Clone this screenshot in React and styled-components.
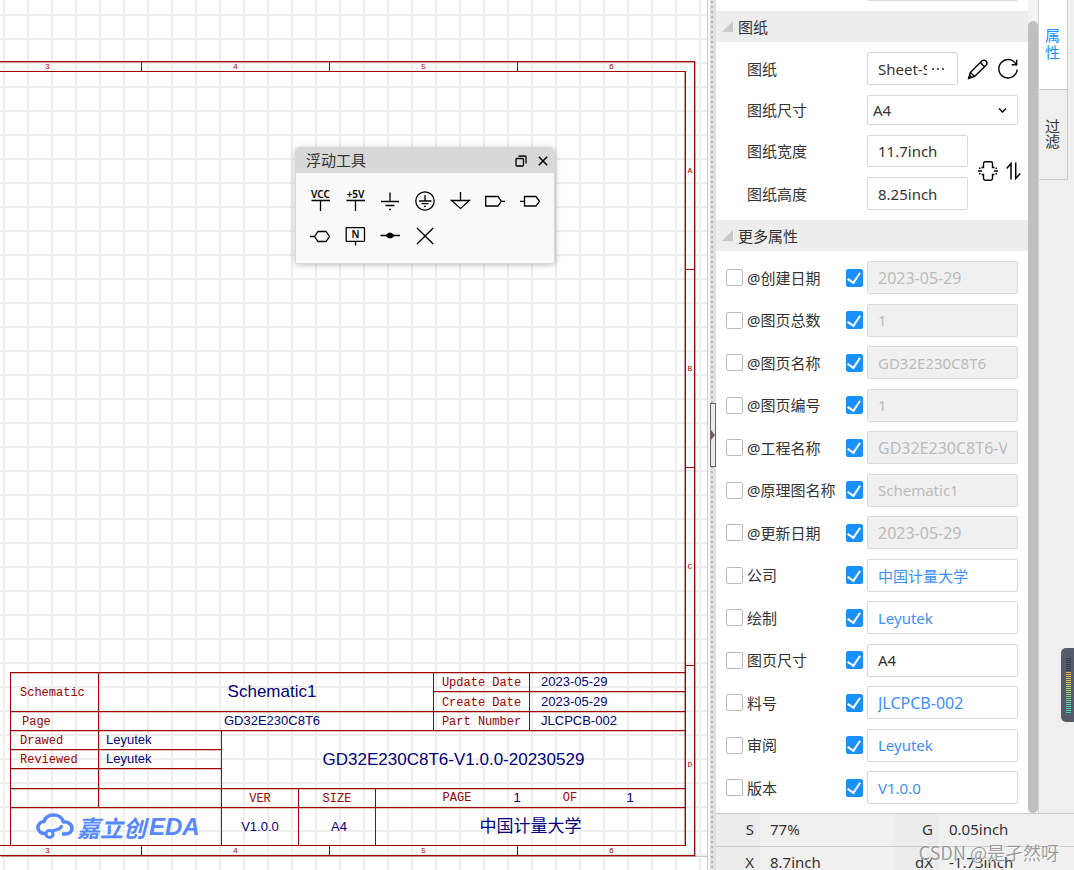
import { useState } from "react";
import styled, { createGlobalStyle, css } from "styled-components";

const GlobalStyle = createGlobalStyle`
  * {
    box-sizing: border-box;
  }
  body {
    margin: 0;
    overflow: hidden;
    color: #333;
    font-family: "Noto Sans", "Noto Sans CJK SC", sans-serif;
    font-size: 15px;
  }
  button,
  input,
  select {
    font: inherit;
    color: inherit;
    margin: 0;
  }
  button {
    padding: 0;
    border: 0;
    background: none;
    cursor: pointer;
  }
  svg {
    display: block;
    overflow: visible;
  }
`;

const Wrap = styled.div`
  display: flex;
  height: 100vh;
  position: relative;
  overflow: hidden;
`;

/* ---------- canvas ---------- */
const Canvas = styled.main`
  flex: 1;
  min-width: 0;
  display: flex;
  flex-direction: column;
  position: relative;
  overflow: hidden;
  border-right: 1px solid #ccc;
  background-color: #fff;
  background-image: linear-gradient(#eee 2px, transparent 2px),
    linear-gradient(90deg, #eee 2px, transparent 2px);
  background-size: 24px 24px;
  background-position: 3px 14px;
`;

const Paper = styled.div`
  flex: 1;
  min-height: 0;
  display: flex;
  margin: 61px 0 13px;
  padding-right: 12px;
  border-bottom: 1px solid #ccc;
`;

const Sheet = styled.div`
  flex: 1;
  min-width: 0;
  display: flex;
  flex-direction: column;
  overflow: hidden;
  border: 1px solid #a00000;
  border-left: 0;
  box-shadow: 1px 1px 0 rgba(160, 0, 0, 0.3), inset 0 1px 0 rgba(160, 0, 0, 0.3);
`;

const Ruler = styled.div`
  display: flex;
  flex: none;
  overflow: hidden;
  font-family: "Liberation Mono", monospace;
  font-size: 8px;
  line-height: 9px;
  color: #a00000;
  span {
    flex: none;
    display: flex;
    align-items: center;
    justify-content: center;
  }
`;

const RulerX = styled(Ruler)`
  height: ${(props) => (props.$top ? 10 : 9)}px;
  margin: 0 8px 0 -46px;
  border-bottom: ${(props) => (props.$top ? "1px solid #a00000" : "0")};
  span {
    width: 188px;
    border-right: 1px solid #a00000;
  }
`;

const RulerY = styled(Ruler)`
  flex-direction: column;
  width: 8px;
  span {
    height: 198px;
    border-bottom: 1px solid #a00000;
  }
`;

const Middle = styled.div`
  flex: 1;
  min-height: 0;
  display: flex;
`;

const Inner = styled.div`
  flex: 1;
  min-width: 0;
  display: flex;
  flex-direction: column;
  justify-content: flex-end;
  padding-left: 10px;
  border-right: 1px solid #a00000;
  border-bottom: 1px solid #a00000;
  box-shadow: inset -1px 0 0 rgba(160, 0, 0, 0.4);
`;

const TitleBlock = styled.table`
  width: 100%;
  table-layout: fixed;
  border-collapse: separate;
  border-spacing: 0;
  color: #000080;
  font-family: "Liberation Sans", "Noto Sans CJK SC", sans-serif;
  font-size: 13px;
  line-height: 16px;
  text-align: center;
  th,
  td {
    padding: 0;
    border-top: 1px solid #a00000;
    border-left: 1px solid #a00000;
    box-shadow: inset 0 1px 0 rgba(160, 0, 0, 0.25);
    white-space: nowrap;
  }
  th {
    padding-top: 2px;
    color: #a00000;
    font-family: "Liberation Mono", monospace;
    font-size: 12px;
    font-weight: 400;
  }
`;

const Tr = styled.tr`
  height: ${(props) => props.$h}px;
`;

const Side = styled.th`
  && {
    padding-left: ${(props) => props.$left || 9}px;
    text-align: left;
  }
`;

const Val = styled.td`
  && {
    padding-left: ${(props) => props.$left || 0}px;
    text-align: ${(props) => (props.$start ? "left" : "center")};
    font-size: ${(props) => (props.$big ? 17 : 13)}px;
  }
`;

const PageCount = styled.div`
  display: grid;
  grid-template-columns: 44px 76px 30px 90px;
  padding-left: 59px;
  font-family: "Liberation Sans", sans-serif;
  b {
    color: #a00000;
    font-family: "Liberation Mono", monospace;
    font-size: 12px;
    font-weight: 400;
  }
  span {
    font-size: 13px;
    color: #000080;
  }
`;

const Logo = styled.div`
  display: flex;
  align-items: center;
  gap: 3px;
  height: 36px;
  padding-left: 25px;
  color: #5588ff;
  font-weight: 700;
  font-style: italic;
  line-height: 30px;
  span {
    font-family: "Noto Sans CJK SC", sans-serif;
    font-size: 23px;
  }
  b {
    font-size: 24px;
  }
`;

/* ---------- floating tools ---------- */
const FloatBox = styled.section`
  position: absolute;
  left: 295px;
  top: 147px;
  width: 260px;
  border: 1px solid #d8d8d8;
  border-radius: 5px 5px 2px 2px;
  overflow: hidden;
  background: #f9f9f9;
  box-shadow: 0 1px 6px rgba(0, 0, 0, 0.25);
  header {
    display: flex;
    align-items: center;
    gap: 10px;
    height: 25px;
    padding: 0 5px 0 10px;
    background: #d8d8d8;
  }
  h2 {
    flex: 1;
    margin: 0;
    font-size: 15px;
    font-weight: 400;
    line-height: 25px;
  }
`;

const ToolGrid = styled.div`
  display: grid;
  grid-template-columns: repeat(7, 35px);
  grid-auto-rows: 35px;
  padding: 10px 6px;
  button {
    display: flex;
    align-items: center;
    justify-content: center;
  }
`;

/* ---------- splitter ---------- */
const Splitter = styled.div`
  flex: none;
  width: 8px;
  display: flex;
  align-items: center;
  border-left: 2px solid #f8f8f8;
  background-color: #e0e0e0;
  background-image: radial-gradient(circle at 2px 2px, #b4b4b4 1px, transparent 1px);
  background-size: 6px 5px;
  button {
    width: 6px;
    height: 64px;
    border: 1px solid #6b5f5f;
    background: #ebebeb;
  }
`;

/* ---------- right side ---------- */
const Aside = styled.aside`
  flex: 0 0 358px;
  min-width: 0;
  display: flex;
  flex-direction: column;
  background: #efefef;
`;

const Upper = styled.div`
  flex: 1;
  min-height: 0;
  display: flex;
`;

const Panel = styled.form`
  flex: 1;
  min-width: 0;
  display: flex;
  flex-direction: column;
  background: #fff;
  overflow: hidden;
`;

const PrevField = styled.div`
  flex: none;
  height: 1px;
  margin: 0 11px 10px 152px;
  background: #d9d9d9;
`;

const SectionHead = styled.button`
  flex: none;
  display: flex;
  align-items: center;
  gap: 5px;
  height: 31px;
  padding: 0 6px 1px;
  background: #ededed;
  text-align: left;
  &::before {
    content: "";
    border-left: 11px solid transparent;
    border-bottom: 11px solid #c9c9c9;
  }
`;

const SheetForm = styled.div`
  flex: none;
  display: flex;
  flex-direction: column;
  gap: 10px;
  padding: 10px 10px 10px 31px;
`;

const Line = styled.div`
  display: flex;
  align-items: center;
  label {
    flex: none;
    width: 120px;
    padding-bottom: 1px;
  }
`;

const SizeGroup = styled.div`
  display: flex;
  align-items: center;
`;

const Stack = styled.div`
  display: flex;
  flex-direction: column;
  gap: 10px;
`;

const IconPair = styled.div`
  display: flex;
  align-items: center;
  gap: ${(props) => props.$gap}px;
  margin-left: 10px;
  ${SizeGroup} & {
    padding-bottom: 3px;
  }
`;

const box = css`
  border: 1px solid #d9d9d9;
  border-radius: 2px;
  background: #fff;
  outline: 0;
`;

const tones = { normal: "#333", link: "#3c8ffc", off: "#bbb" };

const Input = styled.input`
  ${box}
  width: ${(props) => props.$w || "100%"};
  min-width: 0;
  height: ${(props) => props.$h || 33}px;
  padding: 0 10px;
  font-size: ${(props) => (props.$code ? 16 : 15)}px;
  color: ${(props) => tones[props.$tone || "normal"]};
  &:disabled {
    background: #f0f0f0;
  }
`;

const Picker = styled.div`
  ${box}
  flex: none;
  display: flex;
  align-items: center;
  width: 91px;
  height: 33px;
  padding: 0 11px 0 10px;
  gap: 4px;
  input {
    width: 49px;
    padding: 0;
    border: 0;
    outline: 0;
    background: none;
  }
  button {
    flex: 1;
  }
`;

const SelectBox = styled.div`
  ${box}
  flex: 1;
  display: grid;
  align-items: center;
  select,
  svg {
    grid-area: 1 / 1;
  }
  select {
    appearance: none;
    height: 28px;
    padding: 0 5px;
    border: 0;
    outline: 0;
    background: none;
  }
  svg {
    justify-self: end;
    margin-right: 10px;
    pointer-events: none;
  }
`;

const PropList = styled.div`
  flex: 1;
  min-height: 0;
  display: flex;
  flex-direction: column;
  justify-content: space-between;
  padding: 10px 10px 9px;
`;

const PropRow = styled.div`
  display: grid;
  grid-template-columns: 17px 95px 17px 1fr;
  column-gap: 4px;
  align-items: center;
  label {
    padding-bottom: 1px;
    white-space: nowrap;
  }
`;

const Check = styled.input.attrs({ type: "checkbox" })`
  appearance: none;
  display: grid;
  place-items: center;
  width: 17px;
  height: 17px;
  border: 1px solid #bbb;
  border-radius: 2px;
  background: #fff;
  &:checked {
    height: 18px;
    border-color: #1890ff;
    background: #1890ff;
  }
  &:checked::after {
    content: "";
    width: 6px;
    height: 11px;
    margin: 0 1px 2px 0;
    border: solid #fff;
    border-width: 0 2px 2px 0;
    transform: rotate(34deg);
  }
`;

const ScrollTrack = styled.div`
  flex: none;
  width: 10px;
  padding-top: 21px;
  background: #f3f3f3;
  div {
    height: 100%;
    border-radius: 5px;
    background: #bfbfbf;
  }
`;

const Tabs = styled.nav`
  flex: none;
  width: 36px;
  border-left: 1px solid #d4d4d4;
`;

const Tab = styled.button`
  display: flex;
  align-items: center;
  justify-content: center;
  width: 29px;
  height: 90px;
  padding: 0 7px 2px 6px;
  border: solid #ccc;
  border-width: 0 1px 1px 0;
  line-height: ${(props) => (props.$on ? 17 : 15)}px;
  color: ${(props) => (props.$on ? "#1890ff" : "#333")};
  background: ${(props) => (props.$on ? "#fff" : "#efefef")};
`;

const Status = styled.dl`
  flex: none;
  display: grid;
  grid-template-columns: 44px 1fr 44px 1fr;
  grid-auto-rows: 33px;
  height: 57px;
  margin: 0;
  overflow: hidden;
  line-height: 31px;
  dt,
  dd {
    margin: 0;
    border-top: 1px solid #ccc;
  }
  dt {
    padding-right: 6px;
    text-align: right;
    background: #ececec;
  }
  dd {
    padding-left: 10px;
    background: #f0f0f0;
  }
`;

const Meter = styled.div`
  position: absolute;
  right: 0;
  top: 648px;
  width: 13px;
  height: 74px;
  padding: 9px 3px 8px 5px;
  border-radius: 5px 0 0 5px;
  background: #555b6b;
  div {
    height: 100%;
    background: repeating-linear-gradient(#555b6b 0 1px, transparent 1px 2px),
      linear-gradient(#333947 25%, #f0a830 25%, #d8d84c 45%, #7ed886 70%, #3fd8c8);
  }
`;

const Watermark = styled.div`
  position: absolute;
  right: 15px;
  bottom: 5px;
  font-family: "Noto Sans CJK SC", sans-serif;
  font-size: 18px;
  line-height: 26px;
  color: rgba(140, 140, 140, 0.85);
  text-shadow: 1px 1px 0 rgba(255, 255, 255, 0.8);
  pointer-events: none;
`;

function Icon({ children, size = 20, w = 1.3 }) {
  return (
    <svg
      width={size}
      height={size}
      viewBox={`0 0 ${size} ${size}`}
      fill="none"
      stroke="#000"
      strokeWidth={w}
    >
      {children}
    </svg>
  );
}

function IconText({ y, children }) {
  return (
    <text
      x="10.5"
      y={y}
      textAnchor="middle"
      fontFamily="Noto Sans"
      fontWeight="600"
      fontSize="10"
      fill="#000"
      stroke="none"
    >
      {children}
    </text>
  );
}

const tools = [
  {
    name: "VCC",
    icon: (
      <>
        <IconText y="7">VCC</IconText>
        <path d="M1.5 9.5H20M10.5 9.5V20" />
      </>
    ),
  },
  {
    name: "+5V",
    icon: (
      <>
        <IconText y="7">+5V</IconText>
        <path d="M1.5 9.5H20M10.5 9.5V20" />
      </>
    ),
  },
  {
    name: "GND",
    icon: <path d="M10 1.5V10.5M1 10.5H19M5.5 14.5H14.5M9 18.5H11" />,
  },
  {
    name: "保护地",
    icon: (
      <>
        <circle cx="10" cy="10" r="9.2" />
        <path d="M10 4V10M4 10H16.5M6.5 12.7H13.5M9 15.3H11" />
      </>
    ),
  },
  { name: "模拟地", icon: <path d="M10.5 1V9.5M1.5 9.5H19.5L10.5 17.5Z" /> },
  {
    name: "输出端口",
    icon: <path d="M.7 5.5H13L16.3 10.3L13 15H.7ZM16.3 10.3H20" />,
  },
  {
    name: "输入端口",
    icon: <path d="M0 10.3H4.5M4.5 5.5H16L19.5 10.3L16 15H4.5Z" />,
  },
  {
    name: "双向端口",
    icon: <path d="M0 10.5H4.5L8 5.5H16L19.5 10.5L16 15.5H8L4.5 10.5" />,
  },
  {
    name: "网络标签",
    icon: (
      <>
        <rect x="1.2" y="1.7" width="18.3" height="13.6" rx="0.5" />
        <IconText y="12">N</IconText>
        <path d="M10.5 15.3V19.5" />
      </>
    ),
  },
  {
    name: "连接点",
    icon: (
      <>
        <path d="M.5 9.5H20" />
        <path d="M5 9.5L8.5 6.8H11.5L15 9.5L11.5 12.2H8.5Z" fill="#000" stroke="none" />
      </>
    ),
  },
  { name: "非连接标识", icon: <path d="M2 2L18.2 18M18.2 2L2 18" /> },
];

const props = [
  ["@创建日期", "2023-05-29", "off", true],
  ["@图页总数", "1", "off", false],
  ["@图页名称", "GD32E230C8T6", "off", false],
  ["@图页编号", "1", "off", false],
  ["@工程名称", "GD32E230C8T6-V", "off", true],
  ["@原理图名称", "Schematic1", "off", false],
  ["@更新日期", "2023-05-29", "off", true],
  ["公司", "中国计量大学", "link", false],
  ["绘制", "Leyutek", "link", false],
  ["图页尺寸", "A4", "normal", false],
  ["料号", "JLCPCB-002", "link", true],
  ["审阅", "Leyutek", "link", false],
  ["版本", "V1.0.0", "link", false],
];

function FloatTools() {
  return (
    <FloatBox>
      <header>
        <h2>浮动工具</h2>
        <button aria-label="折叠">
          <Icon size={12}>
            <rect x="1" y="3.5" width="7.5" height="7.5" rx="1" />
            <path d="M3.5 1H10a1 1 0 0 1 1 1V8.5" />
          </Icon>
        </button>
        <button aria-label="关闭">
          <Icon size={12} w={1.5}>
            <path d="M1.8 1.8L10.2 10.2M10.2 1.8L1.8 10.2" />
          </Icon>
        </button>
      </header>
      <ToolGrid>
        {tools.map((tool) => (
          <button key={tool.name} aria-label={tool.name}>
            <Icon>{tool.icon}</Icon>
          </button>
        ))}
      </ToolGrid>
    </FloatBox>
  );
}

function SchematicTable() {
  return (
    <TitleBlock>
      <colgroup>
        <col width="88" />
        <col width="123" />
        <col width="77" />
        <col width="77" />
        <col width="58" />
        <col width="96" />
        <col />
      </colgroup>
      <tbody>
        <Tr $h={19}>
          <Side rowSpan={2}>Schematic</Side>
          <Val rowSpan={2} colSpan={4} $big $left={12}>
            Schematic1
          </Val>
          <th>Update Date</th>
          <Val $start $left={11}>
            2023-05-29
          </Val>
        </Tr>
        <Tr $h={20}>
          <th>Create Date</th>
          <Val $start $left={11}>
            2023-05-29
          </Val>
        </Tr>
        <Tr $h={19}>
          <Side $left={11}>Page</Side>
          <Val colSpan={4} $left={12}>
            GD32E230C8T6
          </Val>
          <th>Part Number</th>
          <Val $start $left={11}>
            JLCPCB-002
          </Val>
        </Tr>
        <Tr $h={19}>
          <Side>Drawed</Side>
          <Val $start $left={7}>
            Leyutek
          </Val>
          <Val rowSpan={3} colSpan={5} $big>
            GD32E230C8T6-V1.0.0-20230529
          </Val>
        </Tr>
        <Tr $h={19}>
          <Side>Reviewed</Side>
          <Val $start $left={7}>
            Leyutek
          </Val>
        </Tr>
        <Tr $h={20}>
          <td />
          <td />
        </Tr>
        <Tr $h={19}>
          <td />
          <td />
          <th>VER</th>
          <th>SIZE</th>
          <Val colSpan={3}>
            <PageCount>
              <b>PAGE</b>
              <span>1</span>
              <b>OF</b>
              <span>1</span>
            </PageCount>
          </Val>
        </Tr>
        <Tr $h={38}>
          <td colSpan={2}>
            <Logo>
              <svg width="38" height="27" viewBox="0 0 38 27" fill="none" stroke="#5588ff">
                <path
                  d="M9 20.5H8C4.5 20.5 2 17.8 2 14.6C2 11.2 4.6 8.7 8 8.5C9.3 4.6 13 2 17.5 2C22.5 2 26.3 4.8 27.4 8.8C32 8.8 36 11.3 36 15.3C36 18.8 33 21 29.5 21H26"
                  strokeWidth="3.6"
                />
                <circle cx="13.5" cy="21" r="3.6" strokeWidth="3" />
                <path d="M16.5 18C19 16.5 23 17.5 25.5 13.5" strokeWidth="3.2" strokeLinecap="round" />
              </svg>
              <span>嘉立创</span>
              <b>EDA</b>
            </Logo>
          </td>
          <td>V1.0.0</td>
          <Val $left={4}>A4</Val>
          <Val colSpan={3} $big>
            中国计量大学
          </Val>
        </Tr>
      </tbody>
    </TitleBlock>
  );
}

export default function App() {
  const [tab, setTab] = useState("属性");
  const cols = ["3", "4", "5", "6"];

  return (
    <Wrap>
      <GlobalStyle />
      <Canvas>
        <Paper>
          <Sheet>
            <RulerX $top>
              {cols.map((c) => (
                <span key={c}>{c}</span>
              ))}
            </RulerX>
            <Middle>
              <Inner>
                <SchematicTable />
              </Inner>
              <RulerY>
                {["A", "B", "C", "D"].map((r) => (
                  <span key={r}>{r}</span>
                ))}
              </RulerY>
            </Middle>
            <RulerX>
              {cols.map((c) => (
                <span key={c}>{c}</span>
              ))}
            </RulerX>
          </Sheet>
        </Paper>
        <FloatTools />
      </Canvas>

      <Splitter>
        <button aria-label="收起面板">
          <svg width="4" height="10" viewBox="0 0 4 10">
            <path d="M0 0L4 5L0 10Z" fill="#6b5f5f" />
          </svg>
        </button>
      </Splitter>

      <Aside>
        <Upper>
          <Panel onSubmit={(e) => e.preventDefault()}>
            <PrevField />
            <SectionHead type="button">图纸</SectionHead>
            <SheetForm>
              <Line>
                <label htmlFor="sheet">图纸</label>
                <Picker>
                  <input id="sheet" defaultValue="Sheet-Symbol_A4" />
                  <button type="button" aria-label="选择图纸">
                    <svg width="14" height="4" viewBox="0 0 14 4" fill="#333">
                      <circle cx="2" cy="2" r="1.1" />
                      <circle cx="7" cy="2" r="1.1" />
                      <circle cx="12" cy="2" r="1.1" />
                    </svg>
                  </button>
                </Picker>
                <IconPair $gap={10}>
                  <button type="button" aria-label="编辑">
                    <Icon w={1.4}>
                      <path d="M.8 19.3L2.3 13.6L14 1.8Q16 .3 18 2Q19.8 4 18.3 6L6.6 17.5Z" />
                      <path d="M12.3 3.6L16.5 7.8M2.3 13.6L6.6 17.5M.8 19.3L3.5 18.3L1.6 16.6Z" />
                    </Icon>
                  </button>
                  <button type="button" aria-label="刷新">
                    <Icon w={1.4}>
                      <path d="M18.2 5.5A9.2 9.2 0 1 0 19.2 10.5M18.7 .8V5.8H13.7" />
                    </Icon>
                  </button>
                </IconPair>
              </Line>
              <Line>
                <label htmlFor="size">图纸尺寸</label>
                <SelectBox>
                  <select id="size" defaultValue="A4">
                    <option>A4</option>
                    <option>A3</option>
                  </select>
                  <Icon size={9}>
                    <path d="M1 2.5L4.5 6L8 2.5" />
                  </Icon>
                </SelectBox>
              </Line>
              <SizeGroup>
                <Stack>
                  <Line>
                    <label htmlFor="width">图纸宽度</label>
                    <Input id="width" $w="101px" $h={32} defaultValue="11.7inch" />
                  </Line>
                  <Line>
                    <label htmlFor="height">图纸高度</label>
                    <Input id="height" $w="101px" defaultValue="8.25inch" />
                  </Line>
                </Stack>
                <IconPair $gap={8}>
                  <button type="button" aria-label="适应大小">
                    <Icon w={1.4}>
                      <path d="M3.5 6.5H5.5V2.5Q5.5 .8 7.2 .8H12.8Q14.5 .8 14.5 2.5V6.5H16.5M3.5 13.5H5.5V17.5Q5.5 19.2 7.2 19.2H12.8Q14.5 19.2 14.5 17.5V13.5H16.5M0 10H4M16 10H20M1 7L2.5 7.7M1 13L2.5 12.3M19 7L17.5 7.7M19 13L17.5 12.3" />
                    </Icon>
                  </button>
                  <button type="button" aria-label="交换宽高">
                    <svg width="15" height="18" viewBox="0 0 15 18" fill="none" stroke="#000" strokeWidth="1.5">
                      <path d="M.7 6.5L5 1.5V17.5M9.7 .5V16.5L14.3 11.5" />
                    </svg>
                  </button>
                </IconPair>
              </SizeGroup>
            </SheetForm>
            <SectionHead type="button">更多属性</SectionHead>
            <PropList>
              {props.map(([name, value, tone, code], i) => (
                <PropRow key={name}>
                  <Check id={`show-name-${i}`} />
                  <label htmlFor={`show-name-${i}`}>{name}</label>
                  <Check defaultChecked aria-label={`显示${name}`} />
                  <Input
                    aria-label={name}
                    defaultValue={value}
                    disabled={tone === "off"}
                    $tone={tone}
                    $code={code}
                  />
                </PropRow>
              ))}
            </PropList>
          </Panel>
          <ScrollTrack>
            <div />
          </ScrollTrack>
          <Tabs>
            {["属性", "过滤"].map((name) => (
              <Tab key={name} $on={tab === name} onClick={() => setTab(name)}>
                {name}
              </Tab>
            ))}
          </Tabs>
        </Upper>
        <Status>
          <dt>S</dt>
          <dd>77%</dd>
          <dt>G</dt>
          <dd>0.05inch</dd>
          <dt>X</dt>
          <dd>8.7inch</dd>
          <dt>dX</dt>
          <dd>-1.73inch</dd>
        </Status>
      </Aside>

      <Meter>
        <div />
      </Meter>
      <Watermark>CSDN @是孑然呀</Watermark>
    </Wrap>
  );
}
